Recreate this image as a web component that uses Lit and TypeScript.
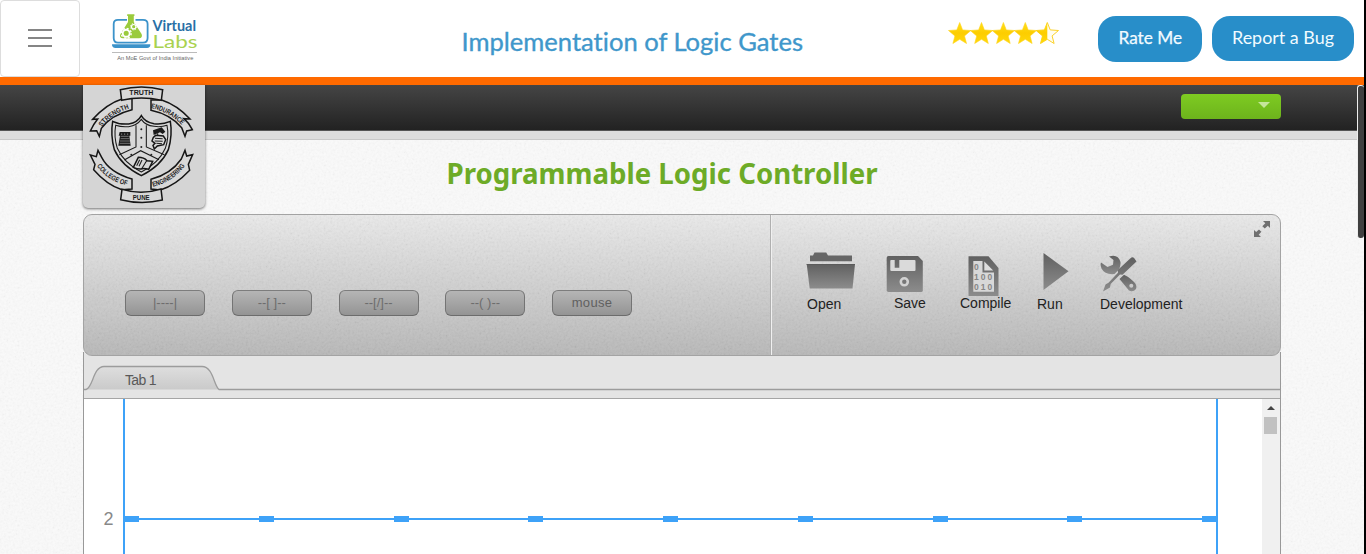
import { LitElement, html, css, svg } from "lit";
import { customElement } from "lit/decorators.js";

@customElement("lab-logo")
class LabLogo extends LitElement {
  static styles = css`
    :host { display: block; width: 90px; height: 50px; }
    svg { display: block; overflow: visible; }
    .virtual { font: 700 15px Lato, sans-serif; fill: #286fa6; }
    .labs { font: 400 17px Lato, sans-serif; fill: #a9d250; }
    .motto { font: 5.8px "Liberation Sans", sans-serif; fill: #666; }
  `;
  render() {
    return html`<svg width="90" height="50" viewBox="110 13 90 50">
      <path d="M127 19.800H118Q113.700 19.800 113.700 24V38Q113.700 42.600 118 42.600H143Q147.600 42.600 147.600 38V24Q147.600 19.800 143 19.800H135.500" fill="none" stroke="#3c93ca" stroke-width="1.800" />
      <path d="M112 44.200H150.400Q150.400 48 147 48H115.500Q112 48 112 44.200Z" fill="#3c93ca" />
      <path d="M127.200 14.200H134.400V16H133.800V22L141.600 34Q143 38 139 38.300H123Q118.600 38 120.500 34L128 22V16H127.200Z" fill="#9acb3c" />
      <circle cx="126.200" cy="33.300" r="3.500" fill="none" stroke="#fff" stroke-width="1.900" />
      <circle cx="126.200" cy="33.300" r="5" fill="none" stroke="#fff" stroke-width="1.400" stroke-dasharray="1.960 1.960" />
      <circle cx="133.700" cy="26.700" r="2.200" fill="none" stroke="#fff" stroke-width="1.200" />
      <circle cx="133.700" cy="26.700" r="3.200" fill="none" stroke="#fff" stroke-width="1" stroke-dasharray="1.260 1.260" />
      <text class="virtual" x="152.500" y="30.800" textLength="43.500" lengthAdjust="spacingAndGlyphs">Virtual</text>
      <text class="labs" x="152.500" y="48" textLength="45" lengthAdjust="spacingAndGlyphs">Labs</text>
      <path d="M112 52.500H197" stroke="#aaa" stroke-width=".8" />
      <text class="motto" x="117.300" y="59.700" textLength="76" lengthAdjust="spacingAndGlyphs">An MoE Govt of India Initiative</text>
    </svg>`;
  }
}

const STAR = "M0-11.500 2.900-4.100 11.200-3.500 4.800 1.900 6.800 9.500 0 5.300-6.800 9.500-4.800 1.900-11.200-3.500-2.900-4.100Z";

@customElement("star-rating")
class StarRating extends LitElement {
  static styles = css`:host { display: block; width: 112px; height: 26px; } svg { display: block; }`;
  render() {
    return html`<svg width="112" height="26" viewBox="948 20 112 26">
      <defs>
        <linearGradient id="gold" x1="0" y1="0" x2="0" y2="1"><stop offset="0" stop-color="#ffe01a" /><stop offset=".5" stop-color="#fdcd00" /><stop offset="1" stop-color="#ffd90a" /></linearGradient>
      </defs>
      ${[959.7, 981.5, 1003.4, 1025.3].map((x) => svg`<path transform="translate(${x} 34)" d=${STAR} fill="url(#gold)" stroke="#ffd31a" stroke-width=".6" />`)}
      <path transform="translate(1047.300 34)" d=${STAR} fill="#fffdf0" stroke="#fbd22b" stroke-width="1" />
      <path transform="translate(1047.300 34)" d="M0-11.500V5.300L-6.800 9.500-4.800 1.900-11.200-3.500-2.900-4.100Z" fill="url(#gold)" />
    </svg>`;
  }
}

@customElement("college-crest")
class CollegeCrest extends LitElement {
  static styles = css`
    :host { display: block; width: 122px; height: 123px; background: #d5d5d5; border-radius: 0 0 5px 5px; box-shadow: 0 1px 3px rgba(0,0,0,.55); }
    svg { display: block; overflow: visible; }
    text { font: 700 21px "Liberation Sans", sans-serif; fill: #1c1c1c; }
    .ribbon { fill: #d8d8d8; stroke: #161616; stroke-width: 4.500; stroke-linejoin: miter; }
    .line { fill: none; stroke: #1c1c1c; stroke-width: 3.200; }
  `;
  render() {
    return html`<svg width="122" height="123" viewBox="24 30 366 369">
      <defs>
        <path id="p1" d="M80 156Q112 115 167 99" />
        <path id="p2" d="M227 99Q285 111 323 153" />
        <path id="p3" d="M65 273Q100 320 162 333" />
        <path id="p4" d="M234 335Q295 321 333 268" />
      </defs>
      <path class="ribbon" d="M171 70V104Q109 119 79 160L73 184 65 167 46 168Q55 148 68 132L53 133Q96 86 141 72Z" />
      <path class="ribbon" d="M228 75V106Q286 118 320 158L330 184 335 168 352 164Q343 145 327 131L345 132Q306 90 260 75Z" />
      <path class="ribbon" d="M136 44Q199 28 263 44L259 76Q199 62 140 76Z" />
      <path class="ribbon" d="M171 342V312Q103 292 80 247L69 226 64 245 46 240 60 268 56 284Q96 330 141 344Z" />
      <path class="ribbon" d="M228 342V313Q288 297 319 252L330 226 335 243 353 239 340 268 344 286Q301 332 256 345Z" />
      <path class="ribbon" d="M141 343Q199 361 258 342L262 375Q199 390 137 374Z" />
      <path d="M199 122Q188 143 161 147 133 149 113 139 106 180 118 224 140 273 199 302 258 273 280 224 293 180 286 139 264 149 237 146 210 142 199 122Z" class="ribbon" />
      <path class="line" d="M199 133Q186 151 161 155 139 157 122 151 116 184 127 220 147 265 199 291 251 265 271 220 283 184 276 151 259 157 237 154 211 151 199 133Z" />
      <path class="line" d="M183 151V216L133 239M214 151V216L268 239M148 255L197 227 252 254" />
      <g fill="#222"><circle cx="199" cy="163" r="3" /><circle cx="199" cy="188" r="3" /><circle cx="199" cy="216" r="3" /><circle cx="169" cy="239" r="3" /><circle cx="229" cy="239" r="3" /></g>
      <path d="M134 171H166V182H163L167 212H130L135 182H131Z" fill="#1b1b1b" />
      <path d="M137 184H161M137 191H163M135 198H165M134 205H166M140 175V180M149 175V180M158 175V180" stroke="#bbb" stroke-width="1.600" />
      <path d="M234 166 260 157 271 170 263 177 255 172 236 180Z" fill="#1b1b1b" />
      <path d="M242 181 265 183 272 194 266 209 247 213 238 222 234 211 240 205 231 198 235 187Z" class="ribbon" />
      <path class="line" d="M240 190 263 191M239 198 263 199M244 205 261 206M248 181V175" />
      <path class="ribbon" d="M175 277 190 247Q207 247 216 257L233 259 221 283Q205 278 198 282 188 283 175 277Z" />
      <path class="line" d="M215 257 200 281M185 272 194 254M192 274 201 255M205 274 212 262" />
      <text x="163" y="61" textLength="72" lengthAdjust="spacingAndGlyphs">TRUTH</text>
      <text x="173" y="374" textLength="51" lengthAdjust="spacingAndGlyphs">PUNE</text>
      <text><textPath href="#p1" textLength="101" lengthAdjust="spacingAndGlyphs">STRENGTH</textPath></text>
      <text><textPath href="#p2" textLength="108" lengthAdjust="spacingAndGlyphs">ENDURANCE</textPath></text>
      <text><textPath href="#p3" textLength="110" lengthAdjust="spacingAndGlyphs">COLLEGE OF</textPath></text>
      <text><textPath href="#p4" textLength="117" lengthAdjust="spacingAndGlyphs">ENGINEERING</textPath></text>
    </svg>`;
  }
}

const ICONS = {
  open: svg`<path d="M810 261.300V255.500H813L814.500 252.500H826.200L828 255.500H852V261.300Z" fill="#666" /><path d="M806.700 264H855L852.500 288.500H809.700Z" fill="url(#g)" /><path d="M806.700 264.500H855" stroke="#5b5b5b" />`,
  save: svg`<path d="M888.500 256H918L922.800 261V290.500Q922.800 292 921 292H888.500Q886.700 292 886.700 290.200V257.800Q886.700 256 888.500 256Z" fill="url(#g)" /><path d="M891 260H894.700V267.700H899.300V260H914.500Q915.500 260 915.500 261V270Q915.500 271 914.500 271H891.500Q890.300 271 890.300 270V261Q890.300 260 891 260Z" fill="#dadada" /><circle cx="904.300" cy="281.800" r="3.500" fill="#777" stroke="#d2d2d2" stroke-width="2.600" />`,
  compile: svg`<path d="M968.500 256.300H988.500L998.500 268V296H968.500Z" fill="url(#g)" /><path d="M973.300 261H982.500V272.500H994V291.800H973.300Z" fill="#d8d8d8" /><path d="M984.300 261.500V270.500H993.200Z" fill="#dedede" /><g class="bits"><text x="974" y="270">0</text><text x="974" y="280">1</text><text x="980.800" y="280">0</text><text x="987.600" y="280">0</text><text x="974" y="289.500">0</text><text x="980.800" y="289.500">1</text><text x="987.600" y="289.500">0</text></g>`,
  run: svg`<path d="M1043.500 253 1068.500 271.200 1043.500 290Z" fill="url(#g)" />`,
  development: svg`<path d="M1109 256.500Q1118 253.500 1120.500 262 1121 266 1118.500 270L1114.500 274Q1105 275 1101.500 268.500 1100 264.500 1101 262.500L1107.500 267 1113 264.800 1113.500 260Z" fill="url(#g)" /><path d="M1119.500 279 1124 274.700Q1127.500 276 1133.500 281.500 1137.500 285 1136 289 1133 292.500 1129 290.500Z" fill="url(#g)" /><path d="M1130.500 258.300Q1132.500 256.300 1134.500 258.500L1136.500 261.500 1122.500 274.700 1120 274.500 1110.700 284 1110 287.500 1103 291.500 1105.500 284.500 1108.500 282.800 1118 272.700 1117.800 270Z" fill="url(#g)" /><circle cx="1131.300" cy="285.800" r="2" fill="#ccc" />`,
};

const TOOLS = [
  { label: "Open", icon: ICONS.open, x: 807, slot: "s-open" },
  { label: "Save", icon: ICONS.save, x: 886, slot: "s-save" },
  { label: "Compile", icon: ICONS.compile, x: 960, slot: "s-compile" },
  { label: "Run", icon: ICONS.run, x: 1037, slot: "s-run" },
  { label: "Development", icon: ICONS.development, x: 1100, slot: "s-dev" },
];

@customElement("plc-toolbar")
class PlcToolbar extends LitElement {
  static styles = css`
    :host { display: flex; position: relative; box-sizing: border-box; height: 142px; border: 1px solid #a3a3a3; border-radius: 9px; background: linear-gradient(#e9e9e9, #b8b8b8); overflow: hidden; font-family: "Liberation Sans", Arial, sans-serif; }
    .grain { position: absolute; inset: 0; width: 100%; height: 100%; opacity: .055; pointer-events: none; }
    .parts { position: relative; box-sizing: border-box; width: 687px; padding: 75px 0 0 41px; display: flex; gap: 26.750px; align-items: flex-start; border-right: 1px solid #b0b0b0; }
    .part { box-sizing: border-box; width: 80px; height: 26px; border: 1.500px solid #747474; border-color: #7d7d7d #747474 #6c6c6c; border-radius: 6px; background: linear-gradient(#b5b5b5, #949494); color: #606060; font: 13px/22px "Liberation Sans", Arial, sans-serif; padding: 0; letter-spacing: .3px; white-space: pre; }
    .dash { letter-spacing: 0; color: #6d6d6d; }
    .tools { position: relative; display: grid; grid-template-columns: 79px 74px 77px 63px 90px; padding: 35px 0 0 35px; border-left: 1px solid #f0f0f0; align-content: start; }
    .tool { display: flex; flex-direction: column; font-size: 14px; line-height: 16px; color: #222; }
    .tool svg { display: block; width: 50px; height: 46px; overflow: visible; }
    .s-save { padding-left: 8px; }
    .s-save, .s-compile { margin-top: -1px; }
    .label { display: block; }
    .bits { font: 700 8.500px "Liberation Sans", sans-serif; fill: #868686; }
    .expand { position: absolute; right: 9px; top: 5px; }
  `;
  render() {
    return html`
      <svg class="grain"><filter id="n"><feTurbulence type="fractalNoise" baseFrequency=".45" numOctaves="2" /><feColorMatrix values="1.500 0 0 0 -.25  1.500 0 0 0 -.25  1.500 0 0 0 -.25  0 0 0 0 1" /></filter><rect width="100%" height="100%" filter="url(#n)" /></svg>
      <div class="parts">
        ${["|----|", "--[ ]--", "--[/]--", "--( )--"].map((t) => html`<button class="part dash">${t}</button>`)}
        <button class="part">mouse</button>
      </div>
      <div class="tools">
        ${TOOLS.map((t) => html`<div class="tool">
          <svg viewBox="${t.x} 250 50 46"><defs><linearGradient id="g" x1="0" y1="0" x2="0" y2="1"><stop offset="0" stop-color="#606060" /><stop offset="1" stop-color="#8c8c8c" /></linearGradient></defs>${t.icon}</svg>
          <span class="label ${t.slot}">${t.label}</span>
        </div>`)}
      </div>
      <svg class="expand" width="18" height="18" viewBox="0 0 18 18" fill="#707070"><path d="M10 1H17V8L14.800 5.800 11.800 8.500 9.300 6.200 12.300 3.300ZM8 17H1V10L3.200 12 6 9.500 8.400 11.800 5.700 14.700Z" /></svg>
    `;
  }
}

@customElement("ladder-canvas")
class LadderCanvas extends LitElement {
  static styles = css`
    :host { display: flex; flex: 1; min-height: 0; background: #fff; }
    .sheet { display: block; flex: 1; height: 155px; }
    .number { font: 18px "Liberation Sans", Arial, sans-serif; fill: #888; }
    .bar { width: 18px; background: #f0f0f0; display: flex; flex-direction: column; align-items: center; padding-top: 7px; gap: 7px; box-sizing: border-box; }
    .arrow { width: 0; border: 4px solid transparent; border-top: 0; border-bottom: 4px solid #444; }
    .thumb { width: 13px; height: 17px; background: #c1c1c1; margin-right: 1px; }
  `;
  render() {
    return html`
      <svg class="sheet" viewBox="84 399 1178 155">
        <g fill="#3ea2f8">
          <rect x="123" y="399" width="2" height="155" /><rect x="1216" y="399" width="2" height="155" />
          <rect x="124" y="518" width="1093" height="2" />
          ${Array.from({ length: 9 }, (_, i) => svg`<rect x=${Math.round(124 + i * 134.75)} y="516" width="15" height="6" />`)}
        </g>
        <text class="number" x="103.500" y="525">2</text>
      </svg>
      <div class="bar"><div class="arrow"></div><div class="thumb"></div></div>
    `;
  }
}

@customElement("app-root")
class AppRoot extends LitElement {
  static styles = css`
    :host { display: flex; flex-direction: column; width: 1366px; height: 554px; overflow: hidden; position: relative; background: #fff; font-family: "Liberation Sans", Arial, sans-serif; }
    header { display: flex; height: 77px; flex: none; align-items: flex-start; }
    .menu { box-sizing: border-box; width: 80px; height: 77px; border: 1px solid #ddd; border-radius: 4px; background: #fff; padding: 0 0 1px; display: flex; flex-direction: column; align-items: center; justify-content: center; gap: 6px; }
    .menu i { width: 24px; height: 2px; background: #858585; }
    lab-logo { margin: 13px 0 0 30px; }
    .title { margin: 24px 0 0 260px; width: 345px; height: 36px; }
    star-rating { margin: 20px 38px 0 143px; }
    .title text { font: 400 25px Lato, sans-serif; font-variant-ligatures: none; fill: #3f97cb; stroke: #3f97cb; stroke-width: .35; }
    .pill { box-sizing: border-box; border: 0; padding: 0; height: 46px; border-radius: 18px; background: #288ec9; margin-top: 16px; }
    .rate { width: 104px; margin-right: 10px; }
    .bug { width: 142px; height: 45px; }
    .pill svg { display: block; }
    .pill text { font: 16.500px Lato, sans-serif; fill: #f2fbff; }
    .rate text { stroke: #f2fbff; stroke-width: .25; }
    .orange { height: 8px; background: #ff6a00; flex: none; }
    main { flex: 1; min-height: 0; display: flex; flex-direction: column; width: 1364px; background: #fafafa; position: relative; }
    .grain { position: absolute; inset: 0; width: 100%; height: 100%; opacity: .04; }
    .nav { position: relative; box-sizing: border-box; height: 46px; flex: none; display: flex; justify-content: flex-end; padding: 9px 83px 0 0; background: linear-gradient(#454545, #222); border-bottom: 1px solid #555; }
    .user { box-sizing: border-box; width: 100px; height: 25px; border-radius: 4px; background: linear-gradient(#7ecb22, #6db31c); display: flex; justify-content: flex-end; padding: 8px 11px; }
    .caret { width: 0; height: 0; border: 6px solid transparent; border-bottom: 0; border-top-color: #c5e69b; }
    .strip { position: relative; box-sizing: border-box; height: 9px; flex: none; background: #ddd; border-bottom: 1px solid #c9c9c9; }
    college-crest { position: absolute; left: 83px; top: 0; }
    .heading { position: relative; display: block; height: 74px; width: 100%; flex: none; }
    .heading text { font: 700 28.500px "Noto Sans", sans-serif; fill: #6dab27; }
    plc-toolbar { margin: 0 83px; flex: none; z-index: 1; }
    .work { position: relative; box-sizing: border-box; flex: 1; margin: -4px 83px 0; border: solid #999; border-width: 0 1px; background: #e4e4e4; display: flex; flex-direction: column; min-height: 0; }
    .tabs { display: block; width: 100%; height: 47px; flex: none; }
    .tabs text { font: 14px "Liberation Sans", Arial, sans-serif; fill: #595959; }
    .scroll { position: absolute; right: 2px; top: 85px; box-sizing: border-box; width: 7px; height: 153px; background: #3f3f3f; border: 1px solid #eee; border-right: 0; border-bottom: 0; border-radius: 3px; }
    .edge { position: absolute; right: 0; top: 0; width: 2px; height: 554px; background: #000; }
    .cursor { position: absolute; left: 865px; top: 317px; }
  `;
  render() {
    return html`
      <header>
        <button class="menu"><i></i><i></i><i></i></button>
        <lab-logo></lab-logo>
        <svg class="title" viewBox="460 24 345 36"><text x="461.500" y="50.500" textLength="341.500" lengthAdjust="spacingAndGlyphs">Implementation of Logic Gates</text></svg>
        <star-rating></star-rating>
        <button class="pill rate"><svg width="104" height="46"><text x="20.500" y="28" textLength="63.500" lengthAdjust="spacingAndGlyphs">Rate Me</text></svg></button>
        <button class="pill bug"><svg width="142" height="45"><text x="20" y="28" textLength="102" lengthAdjust="spacingAndGlyphs">Report a Bug</text></svg></button>
      </header>
      <div class="orange"></div>
      <main>
        <svg class="grain"><filter id="n"><feTurbulence type="fractalNoise" baseFrequency=".45" numOctaves="2" /><feColorMatrix values="1.500 0 0 0 -.25  1.500 0 0 0 -.25  1.500 0 0 0 -.25  0 0 0 0 1" /></filter><rect width="100%" height="100%" filter="url(#n)" /></svg>
        <div class="nav"><div class="user"><div class="caret"></div></div></div>
        <div class="strip"></div>
        <college-crest></college-crest>
        <svg class="heading" viewBox="0 140 1364 74"><text x="446.500" y="184" textLength="431" lengthAdjust="spacingAndGlyphs">Programmable Logic Controller</text></svg>
        <plc-toolbar></plc-toolbar>
        <section class="work">
          <svg class="tabs" viewBox="84 352 1196 47" preserveAspectRatio="xMinYMin">
            <defs><linearGradient id="t" x1="0" y1="0" x2="0" y2="1"><stop offset="0" stop-color="#dedede" /><stop offset="1" stop-color="#cacaca" /></linearGradient></defs>
            <path d="M86 389.500C93 388 93 366.500 104 366.500H202C213 366.500 214 386 219 389.500Z" fill="url(#t)" />
            <path d="M84 389.500H86C93 388 93 366.500 104 366.500H202C213 366.500 214 386 219 389.500H1280" fill="none" stroke="#9c9c9c" stroke-width="1.300" />
            <path d="M84 398.500H1280" stroke="#a5a5a5" />
            <text x="125" y="384.500" textLength="31.500">Tab 1</text>
          </svg>
          <ladder-canvas></ladder-canvas>
        </section>
      </main>
      <div class="scroll"></div>
      <div class="edge"></div>
      <svg class="cursor" width="14" height="20" viewBox="865 317 14 20"><path d="M866.500 318.300V333.300L869.900 330.200 872.200 335.300 874.700 334.200 872.500 329.300H877Z" fill="#fff" stroke="#2b2f45" stroke-width=".9" /></svg>
    `;
  }
}
